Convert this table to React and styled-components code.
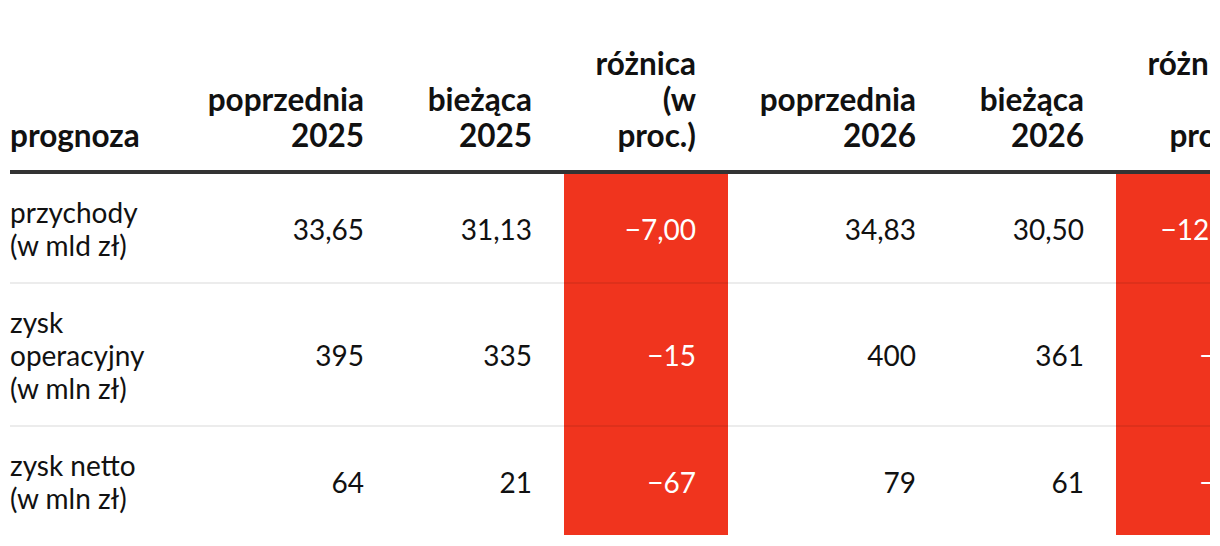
import React from "react";
import styled, { createGlobalStyle } from "styled-components";

const GlobalStyle = createGlobalStyle`
  body {
    margin: 0;
    background: #fff;
    font-family: Lato, "Liberation Sans", sans-serif;
    color: #111;
  }
`;

const Frame = styled.div`
  margin: 10px;
  width: 1200px;
  overflow: hidden;
`;

const Table = styled.table`
  width: 1270px;
  table-layout: fixed;
  border-collapse: separate;
  border-spacing: 0;
`;

const HeadCell = styled.th`
  font-size: 31.5px;
  line-height: 36px;
  font-weight: 700;
  vertical-align: bottom;
  text-align: ${(p) => (p.$label ? "left" : "right")};
  padding: 35px 32px 17px ${(p) => (p.$label ? "0" : "24px")};
  border-bottom: 4px solid #333;
`;

const Cell = styled.td`
  font-size: 28px;
  line-height: 33px;
  font-weight: 400;
  vertical-align: middle;
  text-align: ${(p) => (p.$label ? "left" : "right")};
  padding: 22px 32px 20px ${(p) => (p.$label ? "0" : "24px")};
  border-bottom: ${(p) => (p.$last ? "none" : "2px solid rgba(0, 0, 0, 0.075)")};
  background: ${(p) => (p.$diff ? "#f0341e" : "transparent")};
  color: ${(p) => (p.$diff ? "#fff" : "#111")};
`;

const widths = [166, 220, 168, 164, 220, 168, 164];

const headers = [
  "prognoza",
  "poprzednia 2025",
  "bieżąca 2025",
  "różnica (w proc.)",
  "poprzednia 2026",
  "bieżąca 2026",
  "różnica (w proc.)",
];

const rows = [
  ["przychody (w mld zł)", "33,65", "31,13", "−7,00", "34,83", "30,50", "−12,43"],
  ["zysk operacyjny (w mln zł)", "395", "335", "−15", "400", "361", "−10"],
  ["zysk netto (w mln zł)", "64", "21", "−67", "79", "61", "−23"],
];

const diffCols = [3, 6];

export default function App() {
  return (
    <>
      <GlobalStyle />
      <Frame>
        <Table>
          <colgroup>
            {widths.map((w, i) => (
              <col key={i} style={{ width: w }} />
            ))}
          </colgroup>
          <thead>
            <tr>
              {headers.map((h, i) => (
                <HeadCell key={i} $label={i === 0}>
                  {h}
                </HeadCell>
              ))}
            </tr>
          </thead>
          <tbody>
            {rows.map((row, r) => (
              <tr key={r}>
                {row.map((v, i) => (
                  <Cell
                    key={i}
                    $label={i === 0}
                    $diff={diffCols.includes(i)}
                    $last={r === rows.length - 1}
                  >
                    {v}
                  </Cell>
                ))}
              </tr>
            ))}
          </tbody>
        </Table>
      </Frame>
    </>
  );
}
